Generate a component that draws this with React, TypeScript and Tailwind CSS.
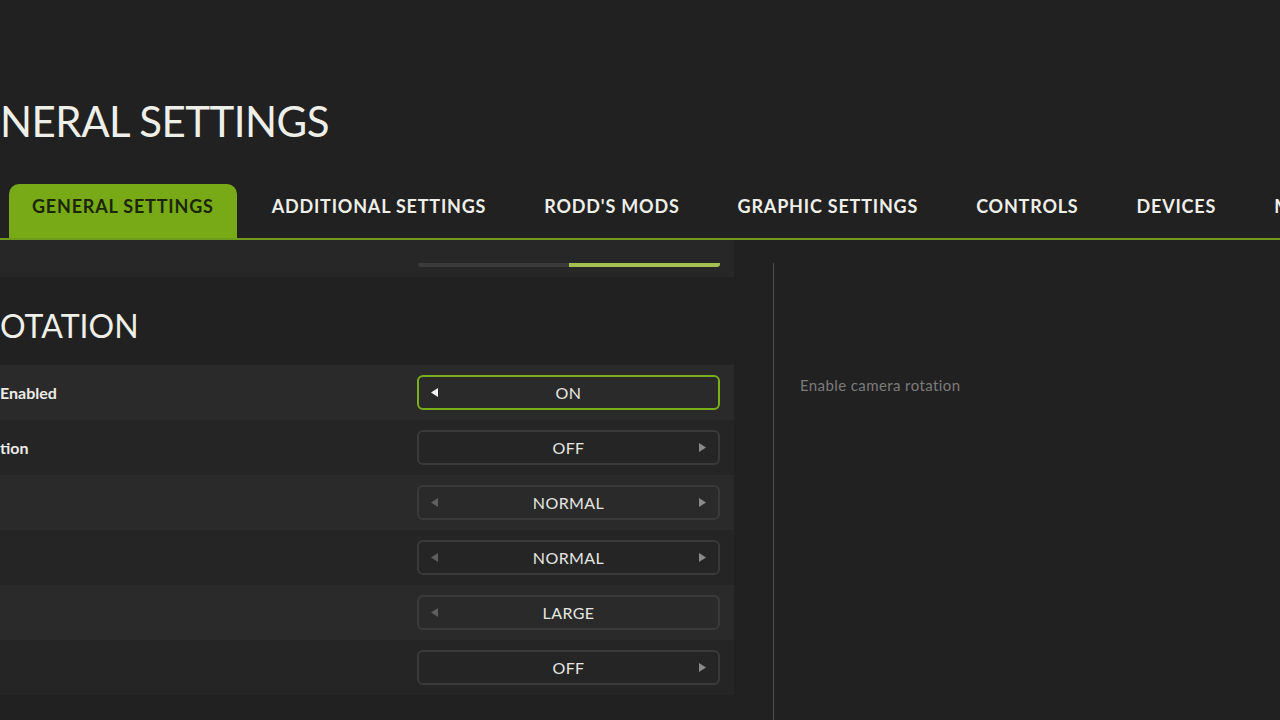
import React from 'react';

type Row = {
  hidden: string;
  visible?: string;
  value: string;
  left: 'on' | 'dim' | 'none';
  right: 'on' | 'dim' | 'none';
  active?: boolean;
};

const tabs = ['GENERAL SETTINGS', 'ADDITIONAL SETTINGS', "RODD'S MODS", 'GRAPHIC SETTINGS', 'CONTROLS', 'DEVICES', 'MISC'];

const rows: Row[] = [
  { hidden: 'Camera Rotation', visible: 'Enabled', value: 'ON', left: 'on', right: 'none', active: true },
  { hidden: 'Invert Rota', visible: 'tion', value: 'OFF', left: 'none', right: 'dim' },
  { hidden: 'Rotation Speed', value: 'NORMAL', left: 'dim', right: 'dim' },
  { hidden: 'Rotation Smoothing', value: 'NORMAL', left: 'dim', right: 'dim' },
  { hidden: 'Rotation Step', value: 'LARGE', left: 'dim', right: 'none' },
  { hidden: 'Auto Reset', value: 'OFF', left: 'none', right: 'dim' },
];

const Arrow = ({ dir, state }: { dir: 'left' | 'right'; state: 'on' | 'dim' | 'none' }) => {
  if (state === 'none') return <span className="w-[8px]" />;
  const fill = state === 'on' ? '#f2f2f2' : dir === 'left' ? '#5f5f5f' : '#8a8a8a';
  return (
    <svg width="8" height="9" viewBox="0 0 8 9">
      {dir === 'left' ? <polygon points="7,0 7,9 0,4.5" fill={fill} /> : <polygon points="1,0 1,9 8,4.5" fill={fill} />}
    </svg>
  );
};

const Selector = ({ row }: { row: Row }) => (
  <div
    className={`w-[303px] h-[35px] rounded-[6px] border-2 flex items-center justify-between px-[12px] ${
      row.active ? 'border-[#7aae1a]' : 'border-[#3a3a3a]'
    }`}
  >
    <Arrow dir="left" state={row.left} />
    <span className="text-[16px] text-[#e6e6e2] tracking-[0.4px]">{row.value}</span>
    <Arrow dir="right" state={row.right} />
  </div>
);

export default function App() {
  return (
    <div className="w-[1280px] h-[720px] bg-[#212121] overflow-hidden text-[#efefe9]" style={{ fontFamily: 'Lato, "Noto Sans", sans-serif' }}>
      {/* page title, scrolled past the left edge */}
      <div className="pt-[95px] h-[184px] whitespace-nowrap">
        <h1 className="text-[42px] leading-[52px] font-normal tracking-[-0.5px]">
          <span className="inline-block w-[200px] -ml-[200px] text-right">GE</span>NERAL SETTINGS
        </h1>
      </div>

      {/* tab strip */}
      <div className="flex items-end gap-3 pl-[9px] h-[56px] border-b-2 border-[#6f9b1c] whitespace-nowrap">
        {tabs.map((t, i) => (
          <div
            key={t}
            className={`h-[54px] px-[23px] pb-[9px] flex items-center text-[18px] font-bold tracking-[0.8px] ${
              i === 0 ? 'bg-[#77aa16] text-[#1b2608] rounded-t-[10px]' : 'text-[#efefe9]'
            }`}
          >
            {t}
          </div>
        ))}
      </div>

      <div className="flex">
        {/* settings list */}
        <div className="w-[734px] shrink-0">
          <div className="h-[37px] bg-[#272727] flex items-end pb-[10px] pl-[418px]">
            <div className="w-[151px] h-[4px] bg-[#3b3b3b] rounded-bl-[3px]" />
            <div className="w-[151px] h-[4px] bg-[#a4bf50] rounded-br-[3px]" />
          </div>

          <div className="h-[88px] pt-[29px] whitespace-nowrap">
            <h2 className="text-[32px] leading-[40px] font-normal">
              <span className="inline-block w-[200px] -ml-[200px] text-right">R</span>OTATION
            </h2>
          </div>

          {rows.map((r, i) => (
            <div
              key={i}
              className={`h-[55px] flex items-center justify-between pr-[14px] ${i % 2 === 0 ? 'bg-[#2a2a2a]' : 'bg-[#252525]'}`}
            >
              <span className="text-[16px] font-bold text-[#ecece8] whitespace-nowrap">
                <span className="inline-block w-[300px] -ml-[300px] text-right pr-[4px]">{r.hidden}</span>
                {r.visible}
              </span>
              <Selector row={r} />
            </div>
          ))}
        </div>

        {/* description column */}
        <div className="ml-[39px] mt-[23px] h-[480px] border-l border-[#4d4d4d] pl-[26px] pt-[111px]">
          <p className="text-[15px] tracking-[0.4px] text-[#7b7b7b]">Enable camera rotation</p>
        </div>
      </div>
    </div>
  );
}
